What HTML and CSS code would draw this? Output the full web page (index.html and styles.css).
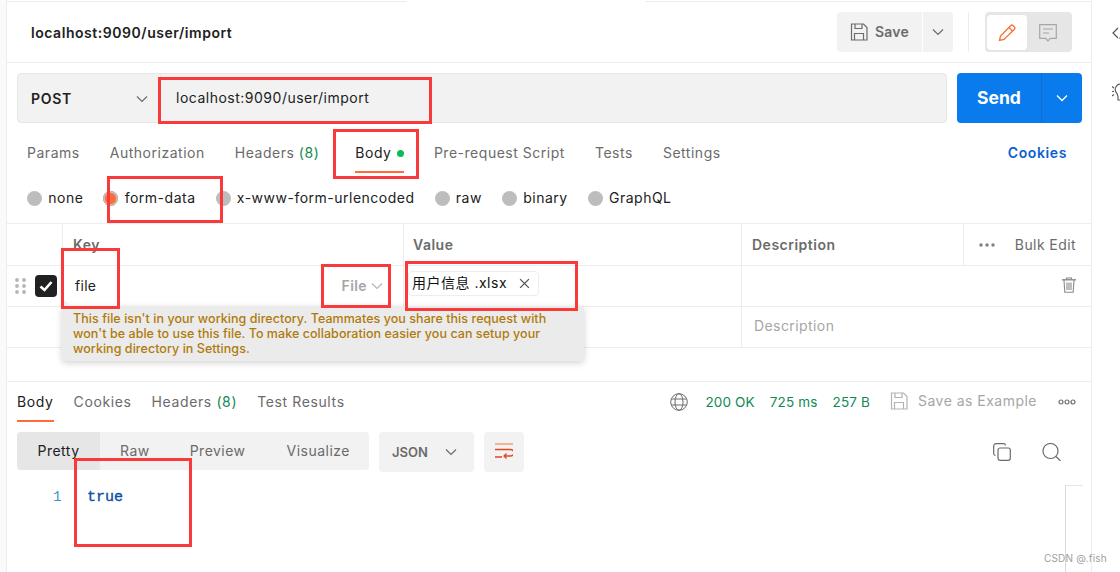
FILE: index.html
```html
<!DOCTYPE html>
<html lang="en">
<head>
<meta charset="utf-8">
<title>Postman</title>
<link rel="stylesheet" href="styles.css">
</head>
<body>
<div class="app">
  <div class="gutter"></div>
  <main class="main">
    <div class="tabstrip"><span class="strip-a"></span><span class="strip-b"></span></div>
    <header class="head">
      <h1 class="title">localhost:9090/user/import</h1>
      <div class="head-actions">
        <button class="save-btn">
          <svg class="ic18" viewBox="0 0 18 18" fill="none" stroke="#6b6b6b" stroke-width="1.200"><path d="M1.500 1h12l3.500 3.500V17H1.500z"/><path d="M5 1v4.500h7V1M4.500 17v-6.500h9V17"/></svg>
          <span>Save</span>
        </button>
        <button class="save-more"><svg class="chev" viewBox="0 0 12 8" fill="none" stroke="#6b6b6b" stroke-width="1.200"><path d="M1 1.500l5 5 5-5"/></svg></button>
        <span class="vsep"></span>
        <div class="toggle">
          <span class="toggle-on"><svg class="ic18" viewBox="0 0 18 18" fill="none" stroke="#ff6c37" stroke-width="1.300"><path d="M1.500 16.500l1-4.500L12.800 1.500a1.500 1.500 0 0 1 2.200 0l1.500 1.500a1.500 1.500 0 0 1 0 2.200L6 15.500z"/><path d="M11 3.500l3.500 3.500"/></svg></span>
          <span class="toggle-off"><svg class="ic18" viewBox="0 0 18 18" fill="none" stroke="#a6a6a6" stroke-width="1.200"><path d="M.7.700h16.600v13.600h-6L9 16.800l-2.300-2.500h-6z"/><path d="M4 5h10M4 9h6"/></svg></span>
        </div>
      </div>
    </header>

    <section class="urlrow">
      <div class="urlbox">
        <div class="method"><span>POST</span><svg class="chev" viewBox="0 0 12 8" fill="none" stroke="#6b6b6b" stroke-width="1.200"><path d="M1 1.500l5 5 5-5"/></svg></div>
        <div class="urltext">localhost:9090/user/import</div>
      </div>
      <div class="send">
        <span class="send-label">Send</span>
        <span class="send-more"><svg class="chev" viewBox="0 0 12 8" fill="none" stroke="#fff" stroke-width="1.300"><path d="M1 1.500l5 5 5-5"/></svg></span>
      </div>
    </section>

    <nav class="reqtabs">
      <span class="tab">Params</span>
      <span class="tab">Authorization</span>
      <span class="tab">Headers <em class="count">(8)</em></span>
      <span class="tab tab-on">Body <i class="dot"></i></span>
      <span class="tab">Pre-request Script</span>
      <span class="tab">Tests</span>
      <span class="tab">Settings</span>
      <span class="cookies">Cookies</span>
    </nav>

    <div class="bodytypes">
      <label class="radio"><i class="bullet"></i>none</label>
      <label class="radio"><i class="bullet bullet-on"></i>form-data</label>
      <label class="radio"><i class="bullet"></i>x-www-form-urlencoded</label>
      <label class="radio"><i class="bullet"></i>raw</label>
      <label class="radio"><i class="bullet"></i>binary</label>
      <label class="radio"><i class="bullet"></i>GraphQL</label>
    </div>

    <div class="table">
      <div class="cell hd"></div>
      <div class="cell hd ruled th">Key</div>
      <div class="cell hd ruled th th-val">Value</div>
      <div class="cell hd ruled th">Description</div>
      <div class="cell hd ruled bulk"><svg class="dots" viewBox="0 0 16 4" fill="#7f7f7f"><circle cx="2" cy="2" r="1.700"/><circle cx="8" cy="2" r="1.700"/><circle cx="14" cy="2" r="1.700"/></svg><span>Bulk Edit</span></div>

      <div class="cell rowhead">
        <svg class="grip" viewBox="0 0 11 16" fill="#b5b5b5"><circle cx="2" cy="2" r="1.900"/><circle cx="9" cy="2" r="1.900"/><circle cx="2" cy="8" r="1.900"/><circle cx="9" cy="8" r="1.900"/><circle cx="2" cy="14" r="1.900"/><circle cx="9" cy="14" r="1.900"/></svg>
        <span class="check"><svg viewBox="0 0 14 12" fill="none" stroke="#fff" stroke-width="2.600"><path d="M1.500 6.500l4 3.500 7-8"/></svg></span>
      </div>
      <div class="cell ruled keycell"><span class="keyname">file</span><span class="keytype">File<svg class="chev chev-soft" viewBox="0 0 12 8" fill="none" stroke="#b5b5b5" stroke-width="1.200"><path d="M1 1.500l5 5 5-5"/></svg></span></div>
      <div class="cell ruled valcell"><span class="chip"><span class="chip-name">用户信息 .xlsx</span><svg class="chip-x" viewBox="0 0 10 10" fill="none" stroke="#555" stroke-width="1.200"><path d="M1 1l8 8M9 1l-8 8"/></svg></span></div>
      <div class="cell ruled span2 trashcell"><svg class="trash" viewBox="0 0 14 16" fill="none" stroke="#8a8a8a" stroke-width="1.100"><path d="M0 2.800h14" stroke-width="1.400"/><path d="M4.500 2.500V1h5v1.500"/><path d="M2 3l.8 12.300h8.400L12 3M5 5.500v7.500M7 5.500v7.500M9 5.500v7.500"/></svg></div>

      <div class="cell"></div>
      <div class="cell ruled"></div>
      <div class="cell ruled"></div>
      <div class="cell ruled span2 placeholder"><span>Description</span></div>
    </div>

    <section class="response">
      <div class="resbar">
        <nav class="restabs">
          <span class="tab tab-on">Body</span>
          <span class="tab">Cookies</span>
          <span class="tab">Headers <em class="count">(8)</em></span>
          <span class="tab">Test Results</span>
        </nav>
        <div class="status">
          <svg class="globe" viewBox="0 0 18 18" fill="none" stroke="#6b6b6b" stroke-width="1"><circle cx="9" cy="9" r="8.300"/><ellipse cx="9" cy="9" rx="4" ry="8.300"/><path d="M1.500 6h15M1.500 12h15"/></svg>
          <span class="ok st1">200 OK</span>
          <span class="ok st2">725 ms</span>
          <span class="ok st3">257 B</span>
          <svg class="ic18 st4" viewBox="0 0 18 18" fill="none" stroke="#b3b3b3" stroke-width="1.200"><path d="M1.500 1h12l3.500 3.500V17H1.500z"/><path d="M5 1v4.500h7V1M4.500 17v-6.500h9V17"/></svg>
          <span class="save-ex">Save as Example</span>
          <svg class="ring-dots" viewBox="0 0 18 6" fill="none" stroke="#6b6b6b" stroke-width="1.200"><circle cx="3" cy="3" r="2"/><circle cx="9" cy="3" r="2"/><circle cx="15" cy="3" r="2"/></svg>
        </div>
      </div>
      <div class="restools">
        <div class="seg">
          <span class="seg-item seg-on">Pretty</span>
          <span class="seg-item seg-raw">Raw</span>
          <span class="seg-item seg-pre">Preview</span>
          <span class="seg-item seg-vis">Visualize</span>
        </div>
        <div class="lang"><span>JSON</span><svg class="chev" viewBox="0 0 12 8" fill="none" stroke="#6b6b6b" stroke-width="1.200"><path d="M1 1.500l5 5 5-5"/></svg></div>
        <div class="wrap"><svg viewBox="0 0 18 18" fill="none" stroke-width="1.300"><path stroke="#ff8a5f" d="M0 1h18"/><path stroke="#e0481f" d="M0 6.500h15.500a2.800 2.800 0 0 1 0 6.500H9M11.500 10.500L9 13l2.500 2.500M0 14h7"/></svg></div>
        <div class="res-icons">
          <svg class="ic18" viewBox="0 0 18 18" fill="none" stroke="#6b6b6b" stroke-width="1.200"><rect x="5" y="5" width="12.300" height="12.300" rx="2"/><path d="M2.500 12.500A2 2 0 0 1 .7 10.500V3A2.300 2.300 0 0 1 3 .7h7.500a2 2 0 0 1 2 1.800"/></svg>
          <svg class="search" viewBox="0 0 19 18" fill="none" stroke="#6b6b6b" stroke-width="1.200"><circle cx="8.500" cy="8" r="7.500"/><path d="M14 13.500l4.500 4.500"/></svg>
        </div>
      </div>
      <div class="editor">
        <span class="lineno">1</span>
        <code class="val">true</code>
        <span class="minimap"></span>
      </div>
    </section>
  </main>
  <aside class="side">
    <svg class="side-code" viewBox="0 0 8 12" fill="none" stroke="#555" stroke-width="1.200"><path d="M6 1L1 6l5 5"/><path d="M8 10.500v1.500"/></svg>
    <svg class="side-bulb" viewBox="0 0 8 18" fill="none" stroke="#555" stroke-width="1.100"><path d="M9 1a5.500 5.500 0 0 0-4 9.500l1 3v3.500h3"/><path d="M0 3.500l2 1.500M0 8.500h2M0 13l2-1.500"/></svg>
  </aside>
</div>

<div class="tip">This file isn't in your working directory. Teammates you share this request with won't be able to use this file. To make collaboration easier you can setup your working directory in Settings.</div>

<div class="mark mark-url"></div>
<div class="mark mark-body"></div>
<div class="mark mark-form"></div>
<div class="mark mark-key"></div>
<div class="mark mark-file"></div>
<div class="mark mark-val"></div>
<div class="mark mark-true"></div>
<div class="watermark">CSDN @.fish</div>
</body>
</html>
```
FILE: styles.css
```css
* { box-sizing: border-box; }
html, body { margin: 0; padding: 0; }
body {
  width: 1120px;
  height: 572px;
  overflow: hidden;
  position: relative;
  background: #fff;
  font-family: Inter, "Noto Sans CJK SC", sans-serif;
  font-size: 14px;
  line-height: 20px;
  color: #212121;
}
button { font: inherit; border: 0; padding: 0; }
em, i { font-style: normal; }
svg { display: block; flex: none; }

.app { display: flex; height: 572px; }
.gutter { width: 6px; background: #fafafa; flex: none; }
.main {
  width: 1086px;
  flex: none;
  border-left: 1px solid #ededed;
  border-right: 1px solid #ededed;
}
.side { flex: 1; display: flex; flex-direction: column; align-items: flex-end; padding-top: 27px; }
.side-code { width: 8px; height: 12px; }
.side-bulb { width: 8px; height: 18px; margin-top: 44px; }

.tabstrip { height: 2px; display: flex; }
.strip-a { width: 400px; border-bottom: 1px solid #ededed; }
.strip-b { width: 446px; margin-left: 238px; border-bottom: 1px solid #ededed; }

.head {
  height: 61px;
  border-bottom: 1px solid #ededed;
  display: flex;
  align-items: flex-start;
  justify-content: space-between;
  padding: 10px 19px 0 24px;
}
.title { margin: 11px 0 0; font-size: 14px; font-weight: 600; line-height: 20px; color: #212121; letter-spacing: .54px; }
.head-actions { display: flex; }
.ic18 { width: 18px; height: 18px; }
.chev { width: 12px; height: 8px; }
.save-btn {
  width: 85px;
  height: 40px;
  background: #f2f2f2;
  border-radius: 4px 0 0 4px;
  display: flex;
  align-items: center;
  gap: 7px;
  padding-left: 13px;
  color: #6b6b6b;
  font-weight: 600;
  letter-spacing: .2px;
}
.save-more {
  width: 30px;
  height: 40px;
  margin-left: 1px;
  background: #f2f2f2;
  border-radius: 0 4px 4px 0;
  display: flex;
  align-items: center;
  justify-content: center;
}
.vsep { width: 1px; height: 40px; background: #ededed; margin: 0 16px 0 15px; }
.toggle {
  width: 87px;
  height: 40px;
  background: #e6e6e6;
  border-radius: 4px;
  display: flex;
  padding: 3px 2px 2px;
}
.toggle-on {
  width: 40px;
  height: 35px;
  background: #fff;
  border-radius: 4px;
  display: flex;
  align-items: center;
  justify-content: center;
}
.toggle-off { width: 41px; height: 35px; display: flex; align-items: center; justify-content: center; }

.urlrow { display: flex; gap: 10px; margin-top: 10px; padding: 0 9px 0 10px; }
.urlbox {
  width: 930px;
  height: 50px;
  background: #f2f2f2;
  border: 1px solid #e6e6e6;
  border-radius: 4px;
  display: flex;
  align-items: center;
}
.method {
  width: 143px;
  height: 48px;
  padding: 2px 12px 0 13px;
  display: flex;
  align-items: center;
  justify-content: space-between;
  font-weight: 600;
  letter-spacing: .7px;
  border-right: 1px solid #e6e6e6;
}
.urltext { padding: 0 0 1px 15px; letter-spacing: .5px; }
.send {
  width: 125px;
  height: 50px;
  background: #097bed;
  border-radius: 4px;
  display: flex;
  color: #fff;
  font-weight: 700;
  font-size: 17.500px;
}
.send-label { width: 84px; display: flex; align-items: center; justify-content: center; }
.send-more {
  flex: 1;
  border-left: 1px solid #0f6fd1;
  display: flex;
  align-items: center;
  justify-content: center;
}

.tab { color: #6b6b6b; white-space: nowrap; display: inline-block; letter-spacing: .52px; }
.count { color: #0f8a52; }
.tab-on { color: #212121; border-bottom: 2px solid #ff6c37; }
.reqtabs { display: flex; align-items: flex-start; padding: 20px 24px 0 20px; height: 50px; gap: 30px; }
.reqtabs .tab { padding-bottom: 8px; }
.reqtabs .tab-on { margin-left: 6px; }
.cookies { margin-left: auto; color: #0a5fd0; font-weight: 600; letter-spacing: .6px; }
.dot { display: inline-block; width: 7px; height: 7px; border-radius: 50%; background: #0cbb52; margin-left: 1px; vertical-align: 1px; }

.bodytypes { display: flex; gap: 20px; padding: 15px 0 0 20px; height: 35px; }
.radio { display: flex; align-items: center; gap: 6.300px; color: #212121; white-space: nowrap; letter-spacing: .5px; }
.bullet { width: 15px; height: 15px; border-radius: 50%; background: #bdbdbd; flex: none; }
.bullet-on { background: #ff6c37; box-shadow: inset 0 0 0 2px #bdbdbd; }

.table {
  display: grid;
  grid-template-columns: 55px 341px 338px 222px 128px;
  grid-template-rows: 42px 41px 41px;
  margin-top: 15px;
  border-top: 1px solid #ededed;
}
.cell { border-bottom: 1px solid #ededed; display: flex; align-items: center; min-width: 0; }
.ruled { border-left: 1px solid #ededed; }
.span2 { grid-column: span 2; }
.th { padding-left: 10px; font-weight: 600; color: #6b6b6b; letter-spacing: .5px; }
.th-val { padding-left: 9px; }
.bulk { justify-content: flex-end; gap: 20px; padding-right: 15px; color: #6b6b6b; letter-spacing: .42px; font-weight: 400; }
.dots { width: 16px; height: 4px; }
.rowhead { padding-left: 8px; gap: 9px; }
.grip { width: 11px; height: 16px; }
.check {
  width: 22px;
  height: 22px;
  border-radius: 4px;
  background: #212121;
  display: flex;
  align-items: center;
  justify-content: center;
}
.check svg { width: 14px; height: 12px; }
.keycell { justify-content: space-between; padding: 0 20px 0 12px; }
.keyname { color: #212121; letter-spacing: .3px; }
.keytype { display: flex; align-items: center; gap: 4px; color: #a6a6a6; font-weight: 600; letter-spacing: .4px; }
.chev-soft { width: 12px; }
.valcell { padding-left: 4px; }
.chip {
  height: 25px;
  width: 131px;
  margin-top: -5px;
  border: 1px solid #ededed;
  border-radius: 4px;
  display: flex;
  align-items: center;
  justify-content: space-between;
  padding: 0 8px 0 3px;
  color: #111;
  white-space: nowrap;
}
.chip-name { letter-spacing: .5px; margin-top: -2px; }
.chip-x { width: 11px; height: 11px; }
.trashcell { justify-content: flex-end; padding-right: 15px; }
.trash { width: 14px; height: 16px; margin-top: -2px; }
.placeholder { padding: 0 0 2px 12px; color: #a6a6a6; letter-spacing: .42px; }

.response { margin-top: 33px; border-top: 1px solid #ededed; }
.resbar { display: flex; justify-content: space-between; align-items: flex-start; padding: 10px 15px 0 10px; height: 40px; }
.restabs { display: flex; gap: 20px; }
.restabs .tab { padding-bottom: 8px; letter-spacing: .62px; }
.status { display: flex; align-items: center; height: 20px; font-size: 13.500px; }
.globe { width: 18px; height: 18px; }
.ok { color: #0f8a52; white-space: nowrap; letter-spacing: .15px; }
.st1 { margin-left: 17px; }
.st2 { margin-left: 15px; }
.st3 { margin-left: 15px; }
.st4 { margin-left: 20px; margin-top: -2px; }
.save-ex { margin-left: 10px; color: #a6a6a6; font-size: 14px; letter-spacing: .48px; margin-top: -2px; }
.ring-dots { width: 18px; height: 6px; margin-left: 21px; }

.restools { display: flex; align-items: flex-start; padding: 10px 30px 0 10px; height: 50px; }
.seg {
  width: 352px;
  height: 38px;
  background: #f2f2f2;
  border-radius: 4px;
  display: flex;
  overflow: hidden;
  color: #6b6b6b;
  letter-spacing: .48px;
}
.seg-item { display: flex; align-items: center; }
.seg-on { width: 83px; justify-content: center; background: #e6e6e6; color: #212121; }
.seg-raw { margin-left: 20px; }
.seg-pre { margin-left: 40px; }
.seg-vis { margin-left: 41px; }
.lang {
  width: 95px;
  height: 40px;
  margin-left: 10px;
  background: #f2f2f2;
  border-radius: 4px;
  display: flex;
  align-items: center;
  justify-content: space-between;
  padding: 0 17px 0 13px;
  color: #6b6b6b;
  font-weight: 600;
  font-size: 13px;
}
.wrap {
  width: 40px;
  height: 40px;
  margin-left: 10px;
  background: #f2f2f2;
  border-radius: 4px;
  display: flex;
  align-items: center;
  justify-content: center;
}
.wrap svg { width: 18px; height: 18px; }
.res-icons { margin-left: auto; display: flex; gap: 31px; padding-top: 11px; }
.search { width: 19px; height: 18px; }

.editor { display: flex; align-items: flex-start; position: relative; padding: 15px 0 0 46px; }
.lineno { width: 34px; color: #3a93c8; font-family: "Liberation Mono", monospace; font-size: 14px; }
.val { margin-top: 1px; color: #0b4fa6; font-family: "Liberation Mono", monospace; font-size: 15px; -webkit-text-stroke: .35px #0b4fa6; }
.minimap { position: absolute; left: 1058px; top: 13px; width: 18px; height: 90px; border-left: 1px solid #d9d9d9; border-top: 1px solid #e6e6e6; }

.tip {
  position: absolute;
  left: 62px;
  top: 306px;
  width: 522px;
  height: 55px;
  padding: 5px 11px;
  background: #ebebeb;
  border-radius: 4px;
  box-shadow: 0 2px 7px rgba(0, 0, 0, .18);
  color: #b07a0a;
  font-size: 12.500px;
  font-weight: 500;
  line-height: 15px;
  letter-spacing: .05px;
}
.tip::before {
  content: "";
  position: absolute;
  left: 1px;
  top: -7px;
  border-left: 8px solid #f1f1f1;
  border-top: 7px solid transparent;
}
.mark { position: absolute; border: 3px solid #f83a3a; }
.mark-url { left: 158px; top: 77px; width: 274px; height: 47px; }
.mark-body { left: 333px; top: 129px; width: 86px; height: 50px; }
.mark-form { left: 107px; top: 176px; width: 116px; height: 47px; }
.mark-key { left: 61px; top: 248px; width: 59px; height: 61px; }
.mark-file { left: 321px; top: 264px; width: 70px; height: 44px; }
.mark-val { left: 405px; top: 261px; width: 173px; height: 50px; }
.mark-true { left: 74px; top: 458px; width: 118px; height: 89px; }
.watermark { position: absolute; left: 1044px; top: 550px; font-size: 10px; line-height: 16px; letter-spacing: .2px; color: #a0a0a0; }
```
